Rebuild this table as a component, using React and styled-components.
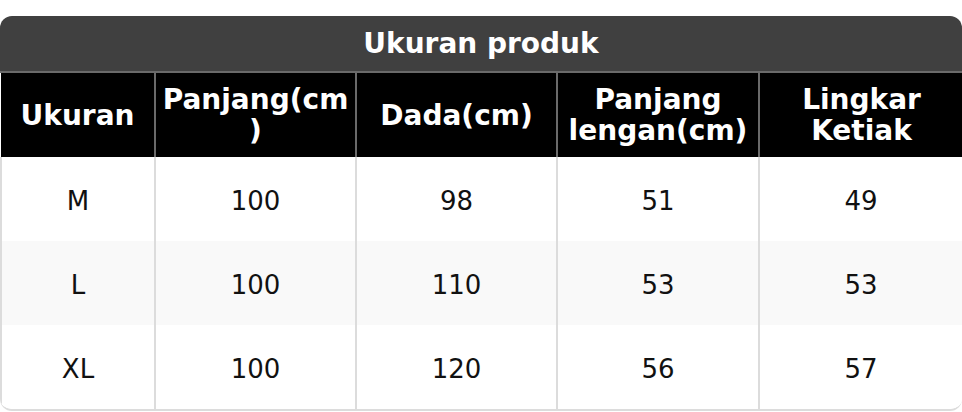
import React from 'react'
import styled, { createGlobalStyle } from 'styled-components'

const GlobalStyle = createGlobalStyle`
  * {
    box-sizing: border-box;
  }

  body {
    margin: 0;
    background: #fff;
    font-family: "DejaVu Sans", Verdana, sans-serif;
  }
`

const headers = ['Ukuran', 'Panjang(cm)', 'Dada(cm)', 'Panjang lengan(cm)', 'Lingkar Ketiak']

const rows = [
  ['M', '100', '98', '51', '49'],
  ['L', '100', '110', '53', '53'],
  ['XL', '100', '120', '56', '57'],
]

const colWidths = [154, 201, 201, 202, 204]

function App() {
  return (
    <Page>
      <GlobalStyle />
      <SizeCard>
        <Title>Ukuran produk</Title>
        <SizeTable>
          <colgroup>
            {colWidths.map((w, i) => (
              <col key={i} style={{ width: w }} />
            ))}
          </colgroup>
          <thead>
            <tr>
              {headers.map(h => (
                <HeadCell key={h}>{h}</HeadCell>
              ))}
            </tr>
          </thead>
          <tbody>
            {rows.map((row, index) => (
              <BodyRow key={row[0]} $striped={index % 2 === 1}>
                {row.map((value, i) => (
                  <BodyCell key={`${row[0]}-${i}`}>{value}</BodyCell>
                ))}
              </BodyRow>
            ))}
          </tbody>
        </SizeTable>
      </SizeCard>
    </Page>
  )
}

const Page = styled.div`
  padding-top: 16px;
`

const SizeCard = styled.div`
  width: 962px;
  border-radius: 12px;
  overflow: hidden;
  border-bottom: 2px solid #dcdcdc;
`

const Title = styled.div`
  height: 57px;
  display: flex;
  align-items: center;
  justify-content: center;
  background: #404040;
  color: #fff;
  font-size: 28px;
  font-weight: bold;
  border-bottom: 2px solid #6a6a6a;
`

const SizeTable = styled.table`
  width: 100%;
  table-layout: fixed;
  border-collapse: collapse;
`

const HeadCell = styled.th`
  height: 84px;
  padding: 8px 4px;
  background: #000;
  color: #fff;
  font-size: 28px;
  line-height: 31px;
  font-weight: bold;
  text-align: center;
  overflow-wrap: anywhere;
  border-left: 2px solid #6a6a6a;

  &:first-child {
    border-left: none;
  }
`

const BodyRow = styled.tr`
  background: ${p => (p.$striped ? '#f9f9f9' : '#fff')};
`

const BodyCell = styled.td`
  height: 84px;
  padding: 3px 6px 0;
  color: #111;
  font-size: 26px;
  text-align: center;
  border-left: 2px solid #dcdcdc;

  &:last-child {
    border-right: 2px solid #dcdcdc;
  }
`

export default App
